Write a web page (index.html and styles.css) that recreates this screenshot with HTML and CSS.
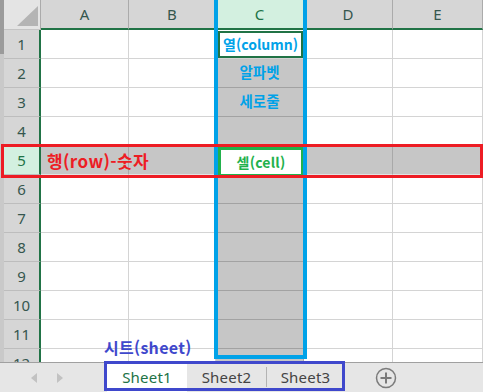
FILE: index.html
```html
<!DOCTYPE html>
<html lang="ko">
<head>
  <meta charset="UTF-8" />
  <meta name="viewport" content="width=device-width, initial-scale=1" />
  <title>엑셀 기본 용어 – 행, 열, 셀, 시트</title>
  <link rel="stylesheet" href="styles.css">
</head>
<body>

  <div class="ventana">

    <!-- Hoja de cálculo -->
    <div class="hoja">
      <div class="esquina"></div>
      <div class="ch">A</div><div class="ch">B</div><div class="ch ch-sel">C</div><div class="ch">D</div><div class="ch">E</div>

      <div class="rh">1</div><div class="c"></div><div class="c"></div>
      <div class="c"><div class="activa">열(column)</div></div>
      <div class="c"></div><div class="c"></div>

      <div class="rh">2</div><div class="c"></div><div class="c"></div>
      <div class="c sel texto-azul">알파벳</div>
      <div class="c"></div><div class="c"></div>

      <div class="rh">3</div><div class="c"></div><div class="c"></div>
      <div class="c sel texto-azul arriba">세로줄</div>
      <div class="c"></div><div class="c"></div>

      <div class="rh">4</div><div class="c"></div><div class="c"></div><div class="c sel"></div><div class="c"></div><div class="c"></div>

      <div class="rh rh-sel">5</div>
      <div class="c sel fila inicio"><span class="texto-rojo">행(row)-숫자</span></div>
      <div class="c sel fila"></div>
      <div class="c sel fila"><div class="celda-verde">셀(cell)</div></div>
      <div class="c sel fila"></div>
      <div class="c sel fila"></div>

      <div class="rh">6</div><div class="c"></div><div class="c"></div><div class="c sel"></div><div class="c"></div><div class="c"></div>
      <div class="rh">7</div><div class="c"></div><div class="c"></div><div class="c sel"></div><div class="c"></div><div class="c"></div>
      <div class="rh">8</div><div class="c"></div><div class="c"></div><div class="c sel"></div><div class="c"></div><div class="c"></div>
      <div class="rh">9</div><div class="c"></div><div class="c"></div><div class="c sel"></div><div class="c"></div><div class="c"></div>
      <div class="rh">10</div><div class="c"></div><div class="c"></div><div class="c sel"></div><div class="c"></div><div class="c"></div>
      <div class="rh">11</div><div class="c"></div><div class="c"></div><div class="c sel"></div><div class="c"></div><div class="c"></div>
      <div class="rh">12</div><div class="c"></div><div class="c"></div><div class="c sel"></div><div class="c"></div><div class="c"></div>
    </div>

    <!-- Barra de hojas -->
    <div class="barra">
      <div class="nav">
        <span class="flecha izq"></span>
        <span class="flecha der"></span>
      </div>
      <div class="pestanas">
        <div class="pestana activa-p">Sheet1</div>
        <div class="pestana">Sheet2</div>
        <div class="pestana">Sheet3</div>
      </div>
      <button class="mas" aria-label="새 시트">
        <svg width="22" height="22" viewBox="0 0 22 22">
          <circle cx="11" cy="11" r="9.5" fill="none" stroke="#7b7b7b" stroke-width="1.5"/>
          <line x1="11" y1="5.5" x2="11" y2="16.5" stroke="#7b7b7b" stroke-width="2"/>
          <line x1="5.5" y1="11" x2="16.5" y2="11" stroke="#7b7b7b" stroke-width="2"/>
        </svg>
      </button>
    </div>

    <!-- Marcas de anotación -->
    <div class="marca-col"></div>
    <div class="marca-fila"></div>
    <div class="marca-hojas"></div>
    <div class="etiqueta-hoja">시트(sheet)</div>
  </div>

</body>
</html>
```

FILE: styles.css
```css
/* ---------- Variables ---------- */
:root{
  --verde-xl:#217346;
  --rejilla:#d4d4d4;
  --cabecera:#d6d6d6;
  --seleccion:#c6c6c6;
  --azul:#00a2e8;
  --rojo:#ed1c24;
  --verde:#22b14c;
  --morado:#3f48cc;
}
*{box-sizing:border-box}
body{
  margin:0;
  font-family:"Noto Sans",Arial,sans-serif;
  background:#fff;
}

/* ---------- Ventana ---------- */
.ventana{
  position:relative;
  width:483px;
  height:392px;
  overflow:hidden;
}

/* ---------- Hoja ---------- */
.hoja{
  height:362px;
  overflow:hidden;
  padding-left:4px;
  background:linear-gradient(#9b9b9b 0 54px,#c9c9c9 54px);
  display:grid;
  grid-template-columns:37px 88px 87px 88px 89px 90px;
  grid-template-rows:30px;
  grid-auto-rows:29px;
}
.esquina{
  position:relative;
  background:#e4e4e4;
  border-right:1px solid #ababab;
  border-bottom:1px solid #c4c4c4;
}
.esquina::after{
  content:"";
  position:absolute;
  left:13px;top:6px;
  width:21px;height:20px;
  background:#b4b4b4;
  clip-path:polygon(100% 0,100% 100%,0 100%);
}
.ch{
  background:var(--cabecera);
  border-right:1px solid #ababab;
  border-bottom:2px solid var(--verde-xl);
  display:flex;align-items:center;justify-content:center;
  font-size:15px;
  color:#35564e;
  padding-bottom:1px;
}
.ch-sel{background:#d3f0e0;color:var(--verde-xl)}
.rh{
  background:var(--cabecera);
  border-right:2px solid var(--verde-xl);
  border-bottom:1px solid #bdbdbd;
  display:flex;align-items:center;justify-content:center;
  font-size:15px;
  color:#35564e;
}
.rh-sel{background:#d3f0e0;color:var(--verde-xl)}

/* ---------- Celdas ---------- */
.c{
  background:#fff;
  border-right:1px solid var(--rejilla);
  border-bottom:1px solid var(--rejilla);
  display:flex;align-items:center;justify-content:center;
  font-family:"Noto Sans CJK KR","Noto Sans",sans-serif;
  font-weight:700;
  font-size:14px;
  white-space:nowrap;
}
.sel{
  background:var(--seleccion);
  border-right-color:#a9a9a9;
  border-bottom-color:#a2a2a2;
}
.fila{
  border-top:1px solid #e2e2e2;
  border-bottom-color:#e2e2e2;
}
.texto-azul{color:var(--azul);padding-bottom:3px;font-size:14.5px}
.arriba{align-items:flex-start;padding-top:2px}
.inicio{justify-content:flex-start}
.texto-rojo{
  color:var(--rojo);
  font-size:17px;
  letter-spacing:.4px;
  position:relative;
  z-index:1;
  margin-left:6px;
}

.activa{
  width:calc(100% - 2px);
  height:calc(100% - 1px);
  margin-left:2px;
  border:2px solid var(--verde-xl);
  background:#fff;
  color:var(--azul);
  display:flex;align-items:center;justify-content:center;
}
.celda-verde{
  width:86px;
  height:30px;
  margin:0 -1px -3px 2px;
  border:3px solid var(--verde);
  background:#fff;
  color:var(--verde);
  display:flex;align-items:center;justify-content:center;
  padding-bottom:1px;
  letter-spacing:.2px;
}

/* ---------- Barra de hojas ---------- */
.barra{
  height:30px;
  background:#e6e6e6;
  border-top:1px solid #a0a0a0;
  display:flex;
  align-items:stretch;
}
.nav{
  width:107px;
  display:flex;align-items:center;
  gap:20px;
  padding-left:31px;
}
.flecha{
  width:0;height:0;
  border-top:5px solid transparent;
  border-bottom:5px solid transparent;
}
.izq{border-right:6px solid #c2c2c2}
.der{border-left:6px solid #c2c2c2}
.pestanas{display:flex;align-items:stretch}
.pestana{
  width:79px;
  display:flex;align-items:center;justify-content:center;
  font-size:15px;
  letter-spacing:.2px;
  color:#444;
  position:relative;
  padding-bottom:1px;
}
.pestana + .pestana::before{
  content:"";
  position:absolute;
  left:0;top:4px;bottom:5px;
  border-left:1px solid #b3b3b3;
}
.activa-p{background:#fff;color:var(--verde-xl);width:80px}
.activa-p + .pestana::before{display:none}
.mas{
  margin-left:30px;
  border:0;background:none;padding:0;
  display:flex;align-items:center;
}

/* ---------- Anotaciones ---------- */
.marca-col{
  position:absolute;
  left:214px;top:-4px;
  width:93px;height:363px;
  border:4px solid var(--azul);
}
.marca-fila{
  position:absolute;
  left:1px;top:144px;
  width:482px;height:34px;
  border:3px solid var(--rojo);
}
.marca-hojas{
  position:absolute;
  left:104px;top:361px;
  width:241px;height:30px;
  border:3px solid var(--morado);
}
.etiqueta-hoja{
  position:absolute;
  left:104px;top:336px;
  font-family:"Noto Sans CJK KR","Noto Sans",sans-serif;
  font-weight:700;
  font-size:16px;
  letter-spacing:.3px;
  line-height:22px;
  color:var(--morado);
}
```
